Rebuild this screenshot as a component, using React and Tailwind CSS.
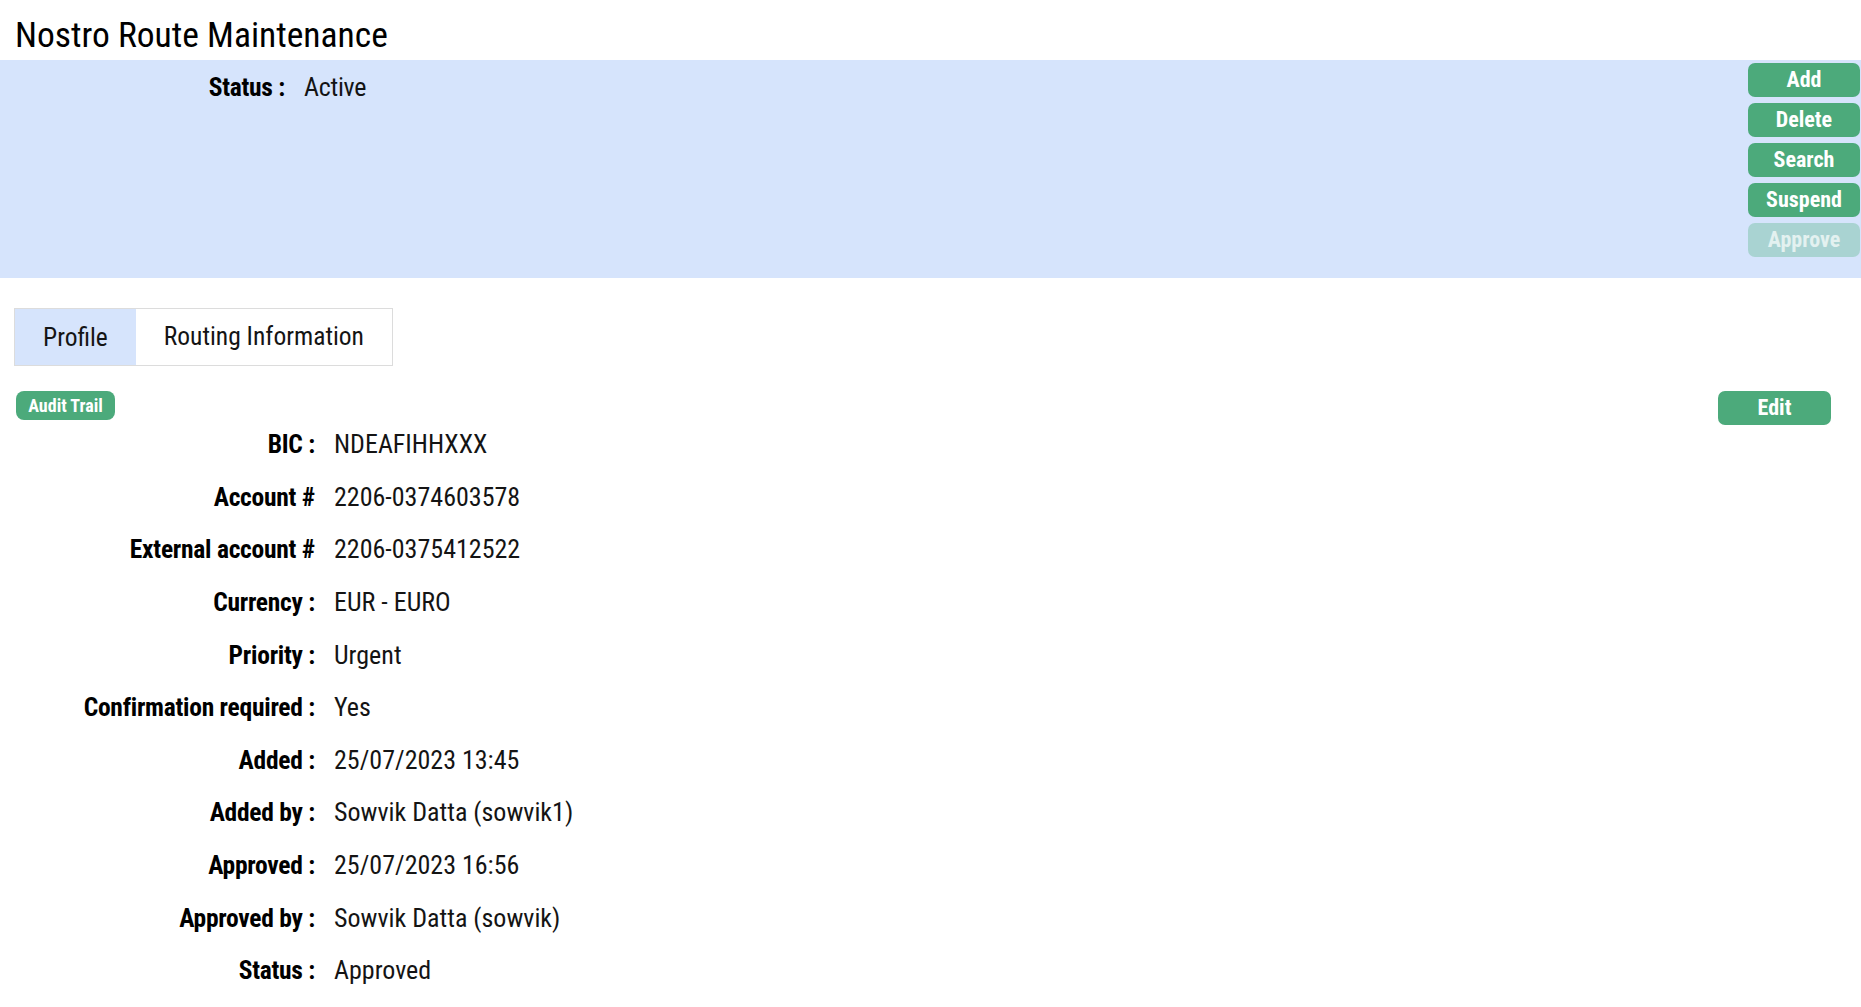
import React from "react";

const FONT = { fontFamily: '"Roboto Condensed", "Liberation Sans Narrow", Roboto, sans-serif' };

const rows = [
  ["BIC :", "NDEAFIHHXXX"],
  ["Account #", "2206-0374603578"],
  ["External account #", "2206-0375412522"],
  ["Currency :", "EUR - EURO"],
  ["Priority :", "Urgent"],
  ["Confirmation required :", "Yes"],
  ["Added :", "25/07/2023 13:45"],
  ["Added by :", "Sowvik Datta (sowvik1)"],
  ["Approved :", "25/07/2023 16:56"],
  ["Approved by :", "Sowvik Datta (sowvik)"],
  ["Status :", "Approved"],
];

function TopButton({ children, disabled }) {
  return (
    <button
      className={
        disabled
          ? "h-[34px] w-[112px] rounded-[7px] bg-[#a9d3d2] text-[#e3f1f0] text-[22px] font-bold leading-none"
          : "h-[34px] w-[112px] rounded-[7px] bg-[#4caa7b] text-white text-[22px] font-bold leading-none"
      }
    >
      {children}
    </button>
  );
}

export default function App() {
  return (
    <div className="min-h-screen w-full bg-white text-[#141414]" style={FONT}>
      <div className="h-[60px] pl-[15px] pt-[14px]">
        <h1 className="text-[35.5px] leading-[42px] font-normal text-black">Nostro Route Maintenance</h1>
      </div>

      <div className="h-[218px] bg-[#d6e4fc] flex justify-between">
        <div className="flex items-start pt-[11px]">
          <div className="w-[285px] text-right text-[25.5px] tracking-[-0.01em] leading-[32px] font-bold text-black">Status :</div>
          <div className="ml-[19px] text-[26px] tracking-[-0.01em] leading-[32px]">Active</div>
        </div>
        <div className="flex flex-col gap-[6px] pt-[3px] pr-[1px]">
          <TopButton>Add</TopButton>
          <TopButton>Delete</TopButton>
          <TopButton>Search</TopButton>
          <TopButton>Suspend</TopButton>
          <TopButton disabled>Approve</TopButton>
        </div>
      </div>

      <div className="pt-[30px] pl-[14px]">
        <div className="inline-flex border border-[#dcdcdc]">
          <div className="h-[56px] px-[28px] flex items-center bg-[#d6e4fc] text-[25.5px]">Profile</div>
          <div className="h-[54px] px-[28px] flex items-center bg-white text-[25.5px]">Routing Information</div>
        </div>
      </div>

      <div className="mt-[25px] h-[27px] flex justify-between items-start pl-[16px] pr-[30px]">
        <button className="h-[29px] w-[99px] rounded-[8px] bg-[#4caa7b] text-white text-[18px] font-bold leading-none">
          Audit Trail
        </button>
        <button className="h-[34px] w-[113px] rounded-[7px] bg-[#4caa7b] text-white text-[22px] font-bold leading-none">
          Edit
        </button>
      </div>

      <div className="flex flex-col">
        {rows.map(([label, value]) => (
          <div key={label} className="h-[52.6px] flex items-center">
            <div className="w-[315px] text-right text-[25.5px] tracking-[-0.01em] font-bold text-black leading-[32px]">{label}</div>
            <div className="ml-[19px] text-[26px] leading-[32px]">{value}</div>
          </div>
        ))}
      </div>
    </div>
  );
}
